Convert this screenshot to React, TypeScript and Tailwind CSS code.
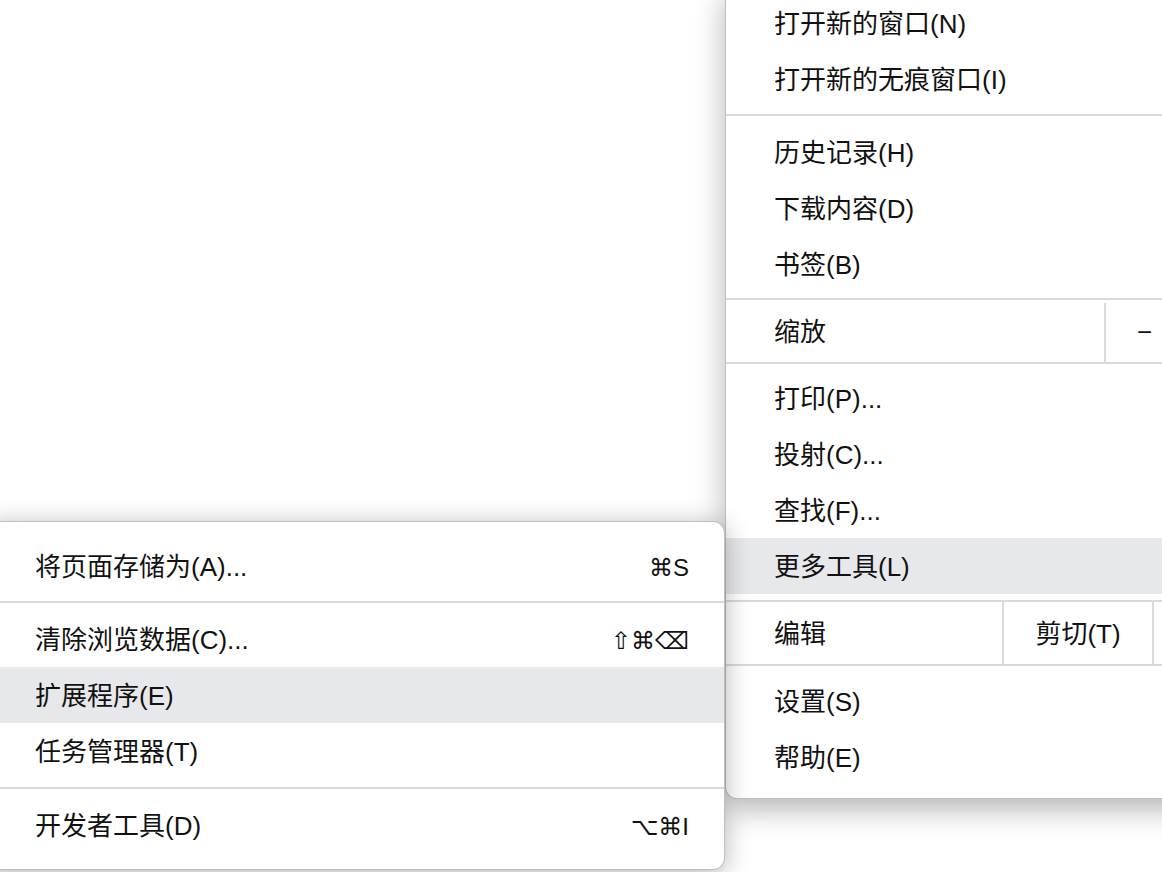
import React from "react";

type Item = { label: string; shortcut?: string; active?: boolean };

const MAIN_TOP: Item[] = [{ label: "打开新的窗口(N)" }, { label: "打开新的无痕窗口(I)" }];
const MAIN_HISTORY: Item[] = [{ label: "历史记录(H)" }, { label: "下载内容(D)" }, { label: "书签(B)" }];
const MAIN_TOOLS: Item[] = [
  { label: "打印(P)..." },
  { label: "投射(C)..." },
  { label: "查找(F)..." },
  { label: "更多工具(L)", active: true },
];
const MAIN_BOTTOM: Item[] = [{ label: "设置(S)" }, { label: "帮助(E)" }];

function Row({ label, shortcut, active }: Item) {
  return (
    <div className={`flex h-[56px] items-center justify-between pt-[3px] pl-[48px] pr-[35px] ${active ? "bg-[#e7e8eb]" : ""}`}>
      <span className="whitespace-nowrap">{label}</span>
      {shortcut && (
        <span className="font-['Liberation_Sans','DejaVu_Sans',sans-serif] text-[24px] leading-none">{shortcut}</span>
      )}
    </div>
  );
}

function Sep({ className = "" }: { className?: string }) {
  return <div className={`h-[2px] bg-[#dadada] ${className}`} />;
}

export default function App() {
  return (
    <div className="relative h-[872px] w-[1162px] overflow-hidden bg-white font-['Liberation_Sans','Noto_Sans_CJK_SC',sans-serif] text-[26px] text-[#111]">
      {/* Main menu */}
      <div className="absolute left-[725px] top-[-13px] w-[560px] rounded-bl-[12px] border border-black/25 bg-white pt-[7px] pb-[13px] shadow-[0_10px_30px_rgba(0,0,0,0.3)]">
        {MAIN_TOP.map((it) => <Row key={it.label} {...it} />)}
        <Sep className="mt-[7px] mb-[8px]" />
        {MAIN_HISTORY.map((it) => <Row key={it.label} {...it} />)}

        {/* Zoom */}
        <div className="mt-[6px] flex h-[66px] border-y-2 border-[#dadada] pt-[3px]">
          <div className="flex w-[380px] shrink-0 items-center border-r-2 border-[#dadada] pl-[48px]">缩放</div>
          <div className="flex w-[52px] shrink-0 items-center pl-[31px]">−</div>
        </div>

        <div className="mt-[6px]">
          {MAIN_TOOLS.map((it) => <Row key={it.label} {...it} />)}
        </div>

        {/* Edit */}
        <div className="mt-[6px] flex h-[66px] border-y-2 border-[#dadada]">
          <div className="flex w-[278px] shrink-0 items-center border-r-2 border-[#dadada] pt-[3px] pl-[48px]">编辑</div>
          <div className="flex w-[150px] shrink-0 items-center justify-center border-r-2 border-[#dadada] pt-[3px]">剪切(T)</div>
        </div>

        <div className="mt-[7px]">
          {MAIN_BOTTOM.map((it) => <Row key={it.label} {...it} />)}
        </div>
      </div>

      {/* More tools submenu */}
      <div className="absolute left-[-14px] top-[521px] w-[739px] rounded-r-[12px] border border-black/25 bg-white pt-[16px] pb-[16px] shadow-[0_4px_26px_rgba(0,0,0,0.3)]">
        <Row label="将页面存储为(A)..." shortcut="⌘S" />
        <Sep className="mt-[7px] mb-[8px]" />
        <Row label="清除浏览数据(C)..." shortcut="⇧⌘⌫" />
        <Row label="扩展程序(E)" active />
        <Row label="任务管理器(T)" />
        <Sep className="mt-[8px] mb-[8px]" />
        <Row label="开发者工具(D)" shortcut="⌥⌘I" />
      </div>
    </div>
  );
}
